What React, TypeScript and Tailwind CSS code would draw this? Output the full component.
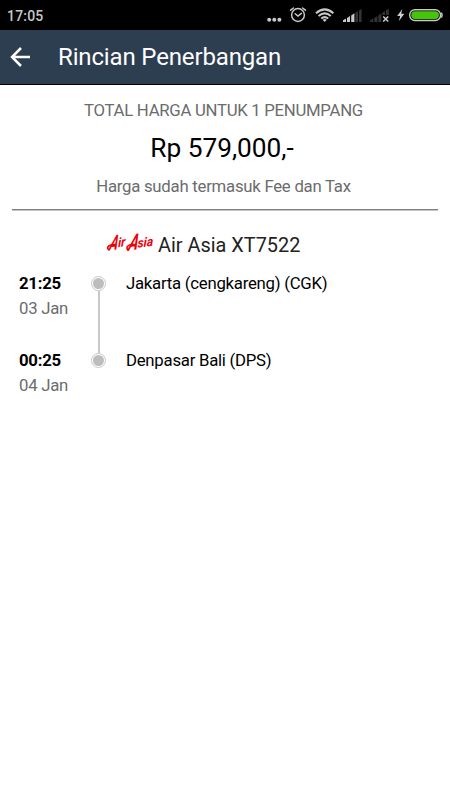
import React from "react";

type TStop = {
  time: string;
  date: string;
  place: string;
};

const stops: TStop[] = [
  { time: "21:25", date: "03 Jan", place: "Jakarta (cengkareng) (CGK)" },
  { time: "00:25", date: "04 Jan", place: "Denpasar Bali (DPS)" },
];

const StatusIcons: React.FC = () => (
  <svg width="184" height="30" viewBox="266 0 184 30" fill="none">
    <g fill="#c8c8c8">
      <circle cx="269.2" cy="19.8" r="2" />
      <circle cx="274.3" cy="19.8" r="2" />
      <circle cx="279.4" cy="19.8" r="2" />
    </g>

    {/* alarm */}
    <g stroke="#c8c8c8" strokeWidth="1.5" strokeLinecap="round">
      <circle cx="298" cy="15" r="6.4" />
      <path d="M290.6 10.2 L293.4 8 M305.4 10.2 L302.6 8" />
      <path d="M295.2 13.7 L298 16.1 L301.4 13.4" />
    </g>

    {/* wifi */}
    <g stroke="#c8c8c8" strokeWidth="2">
      <path d="M316 13.2 Q324.7 5.6 333.4 13.2" />
      <path d="M318.6 15.9 Q324.7 10.8 330.8 15.9" />
      <path d="M321.2 18.5 Q324.7 15.7 328.2 18.5" />
    </g>
    <path d="M322.6 19.8 Q324.7 18.2 326.8 19.8 L324.7 22 Z" fill="#c8c8c8" />

    {/* first sim */}
    <g fill="#c8c8c8">
      <path d="M343 22 V20.2 L346 18.6 V22 Z" />
      <path d="M347 22 V18 L350 16 V22 Z" />
      <path d="M351.2 22 V15.4 L354.4 13.2 V22 Z" />
    </g>
    <g fill="#333333">
      <path d="M355.4 22 V12.8 L358 11 V22 Z" />
      <path d="M359 22 V10.6 L361.6 8.8 V22 Z" />
    </g>

    {/* second sim, no service */}
    <g fill="#333333">
      <path d="M370.3 22 V20.2 L373.3 18.6 V22 Z" />
      <path d="M374.3 22 V18 L377.3 16 V22 Z" />
      <path d="M378.3 22 V15.4 L381.3 13.2 V22 Z" />
      <path d="M382.3 15 V12.8 L385 11 V15 Z" />
      <path d="M386 15 V10.6 L388.8 8.8 V15 Z" />
    </g>
    <path d="M383.2 16.5 L388.2 21.5 M388.2 16.5 L383.2 21.5" stroke="#c8c8c8" strokeWidth="1.6" />

    <path d="M402.3 9 L397.2 16 L400.2 16 L398.8 21.3 L404.3 13.8 L401.2 13.8 Z" fill="#d0d0d0" />

    {/* battery */}
    <rect x="409.7" y="9.7" width="30.8" height="10.8" rx="5.2" stroke="#c8c8c8" strokeWidth="1.4" />
    <rect x="411.3" y="11.2" width="27.6" height="7.8" rx="3.7" fill="#44c50a" />
    <path d="M441.4 12.6 Q443 15.1 441.4 17.6" stroke="#c8c8c8" strokeWidth="1.5" />
  </svg>
);

const AirAsiaLogo: React.FC = () => (
  <svg className="shrink-0 overflow-visible" width="48" height="24" viewBox="0 0 48 24" fill="#ee0008">
    <g fontFamily="Roboto, sans-serif" fontStyle="italic" fontWeight="700">
      <text transform="translate(2.5 19.5) rotate(-8) skewX(-22) scale(.66 1)" fontSize="20">A</text>
      <text transform="translate(12 16.2) rotate(-8) skewX(-10) scale(.92 1)" fontSize="13">ir</text>
      <text transform="translate(21.4 19.8) rotate(-8) skewX(-22) scale(.68 1)" fontSize="22">A</text>
      <text transform="translate(31.4 16.8) rotate(-8) skewX(-10) scale(.95 1)" fontSize="13">sia</text>
    </g>
    <g stroke="#ee0008" strokeWidth="1.5" strokeLinecap="round" fill="none">
      <path d="M9 13.6 Q4 13 1.8 16 Q1.2 18 3 18.8" />
      <path d="M28 13.4 Q23.5 13 21.2 15.6 Q20.4 18.2 22.5 19" />
    </g>
  </svg>
);

const Dot: React.FC = () => (
  <span className="size-[15px] shrink-0 rounded-full border border-[#c8c8c8] bg-[#bdbdbd] bg-clip-content p-px" />
);

const App: React.FC = () => {
  return (
    <div className="h-[800px] w-[450px] overflow-hidden bg-white font-['Roboto',sans-serif] text-black">
      <div className="flex h-[30px] items-center justify-between bg-black pl-[7px]">
        <span className="pt-[2px] text-[14px] font-medium tracking-[0.2px] text-[#c8c8c8]">17:05</span>
        <StatusIcons />
      </div>

      <header className="flex h-[55px] items-center border-b border-black bg-[#2c3e50] pl-[10px] text-white">
        <svg width="21" height="20" viewBox="0 0 21 20" fill="none" stroke="white" strokeWidth="2.5">
          <path d="M20 10 H2 M11 1 L2 10 L11 19" />
        </svg>
        <h1 className="pl-[27px] text-[24px] leading-none tracking-[-0.15px] whitespace-nowrap">Rincian Penerbangan</h1>
      </header>

      <section className="mx-3 flex h-[126px] flex-col items-center pt-[13px] whitespace-nowrap text-[#6c6c6c]">
        <p className="pr-[3px] text-[16.75px] leading-6 tracking-[-0.29px]">TOTAL HARGA UNTUK 1 PENUMPANG</p>
        <p className="mt-[10px] pr-[6px] text-[26.25px] leading-8 text-black">Rp 579,000,-</p>
        <p className="mt-[10px] pr-[3px] text-[16.75px] leading-6 tracking-[-0.25px]">Harga sudah termasuk Fee dan Tax</p>
        <div className="mt-[11px] h-[2px] w-full shrink-0 border-t border-[#808080] bg-[#c4c4c4]" />
      </section>

      <div className="flex h-[60px] items-start pt-[20px] pl-[106px] whitespace-nowrap">
        <AirAsiaLogo />
        <h2 className="pt-[3px] pl-[4px] text-[19.9px] leading-6 text-[#222222]">Air Asia XT7522</h2>
      </div>

      <div className="flex pl-[19px]">
        <div className="flex w-[72px] flex-col gap-[27px]">
          {stops.map(({ time, date }) => (
            <div key={time} className="h-[50px] text-[16.75px] leading-[25px]">
              <p className="font-bold tracking-[-0.25px]">{time}</p>
              <p className="tracking-[-0.25px] text-[#6c6c6c]">{date}</p>
            </div>
          ))}
        </div>

        <div className="flex h-[97px] w-[15px] flex-col items-center pt-[5px]">
          <Dot />
          <span className="w-[2px] grow bg-[#c8c8c8]" />
          <Dot />
        </div>

        <div className="flex flex-col gap-[52px] pl-[20px] text-[16.75px] leading-[25px] tracking-[-0.25px] whitespace-nowrap">
          {stops.map(({ place }) => (
            <p key={place}>{place}</p>
          ))}
        </div>
      </div>
    </div>
  );
};

export default App;
